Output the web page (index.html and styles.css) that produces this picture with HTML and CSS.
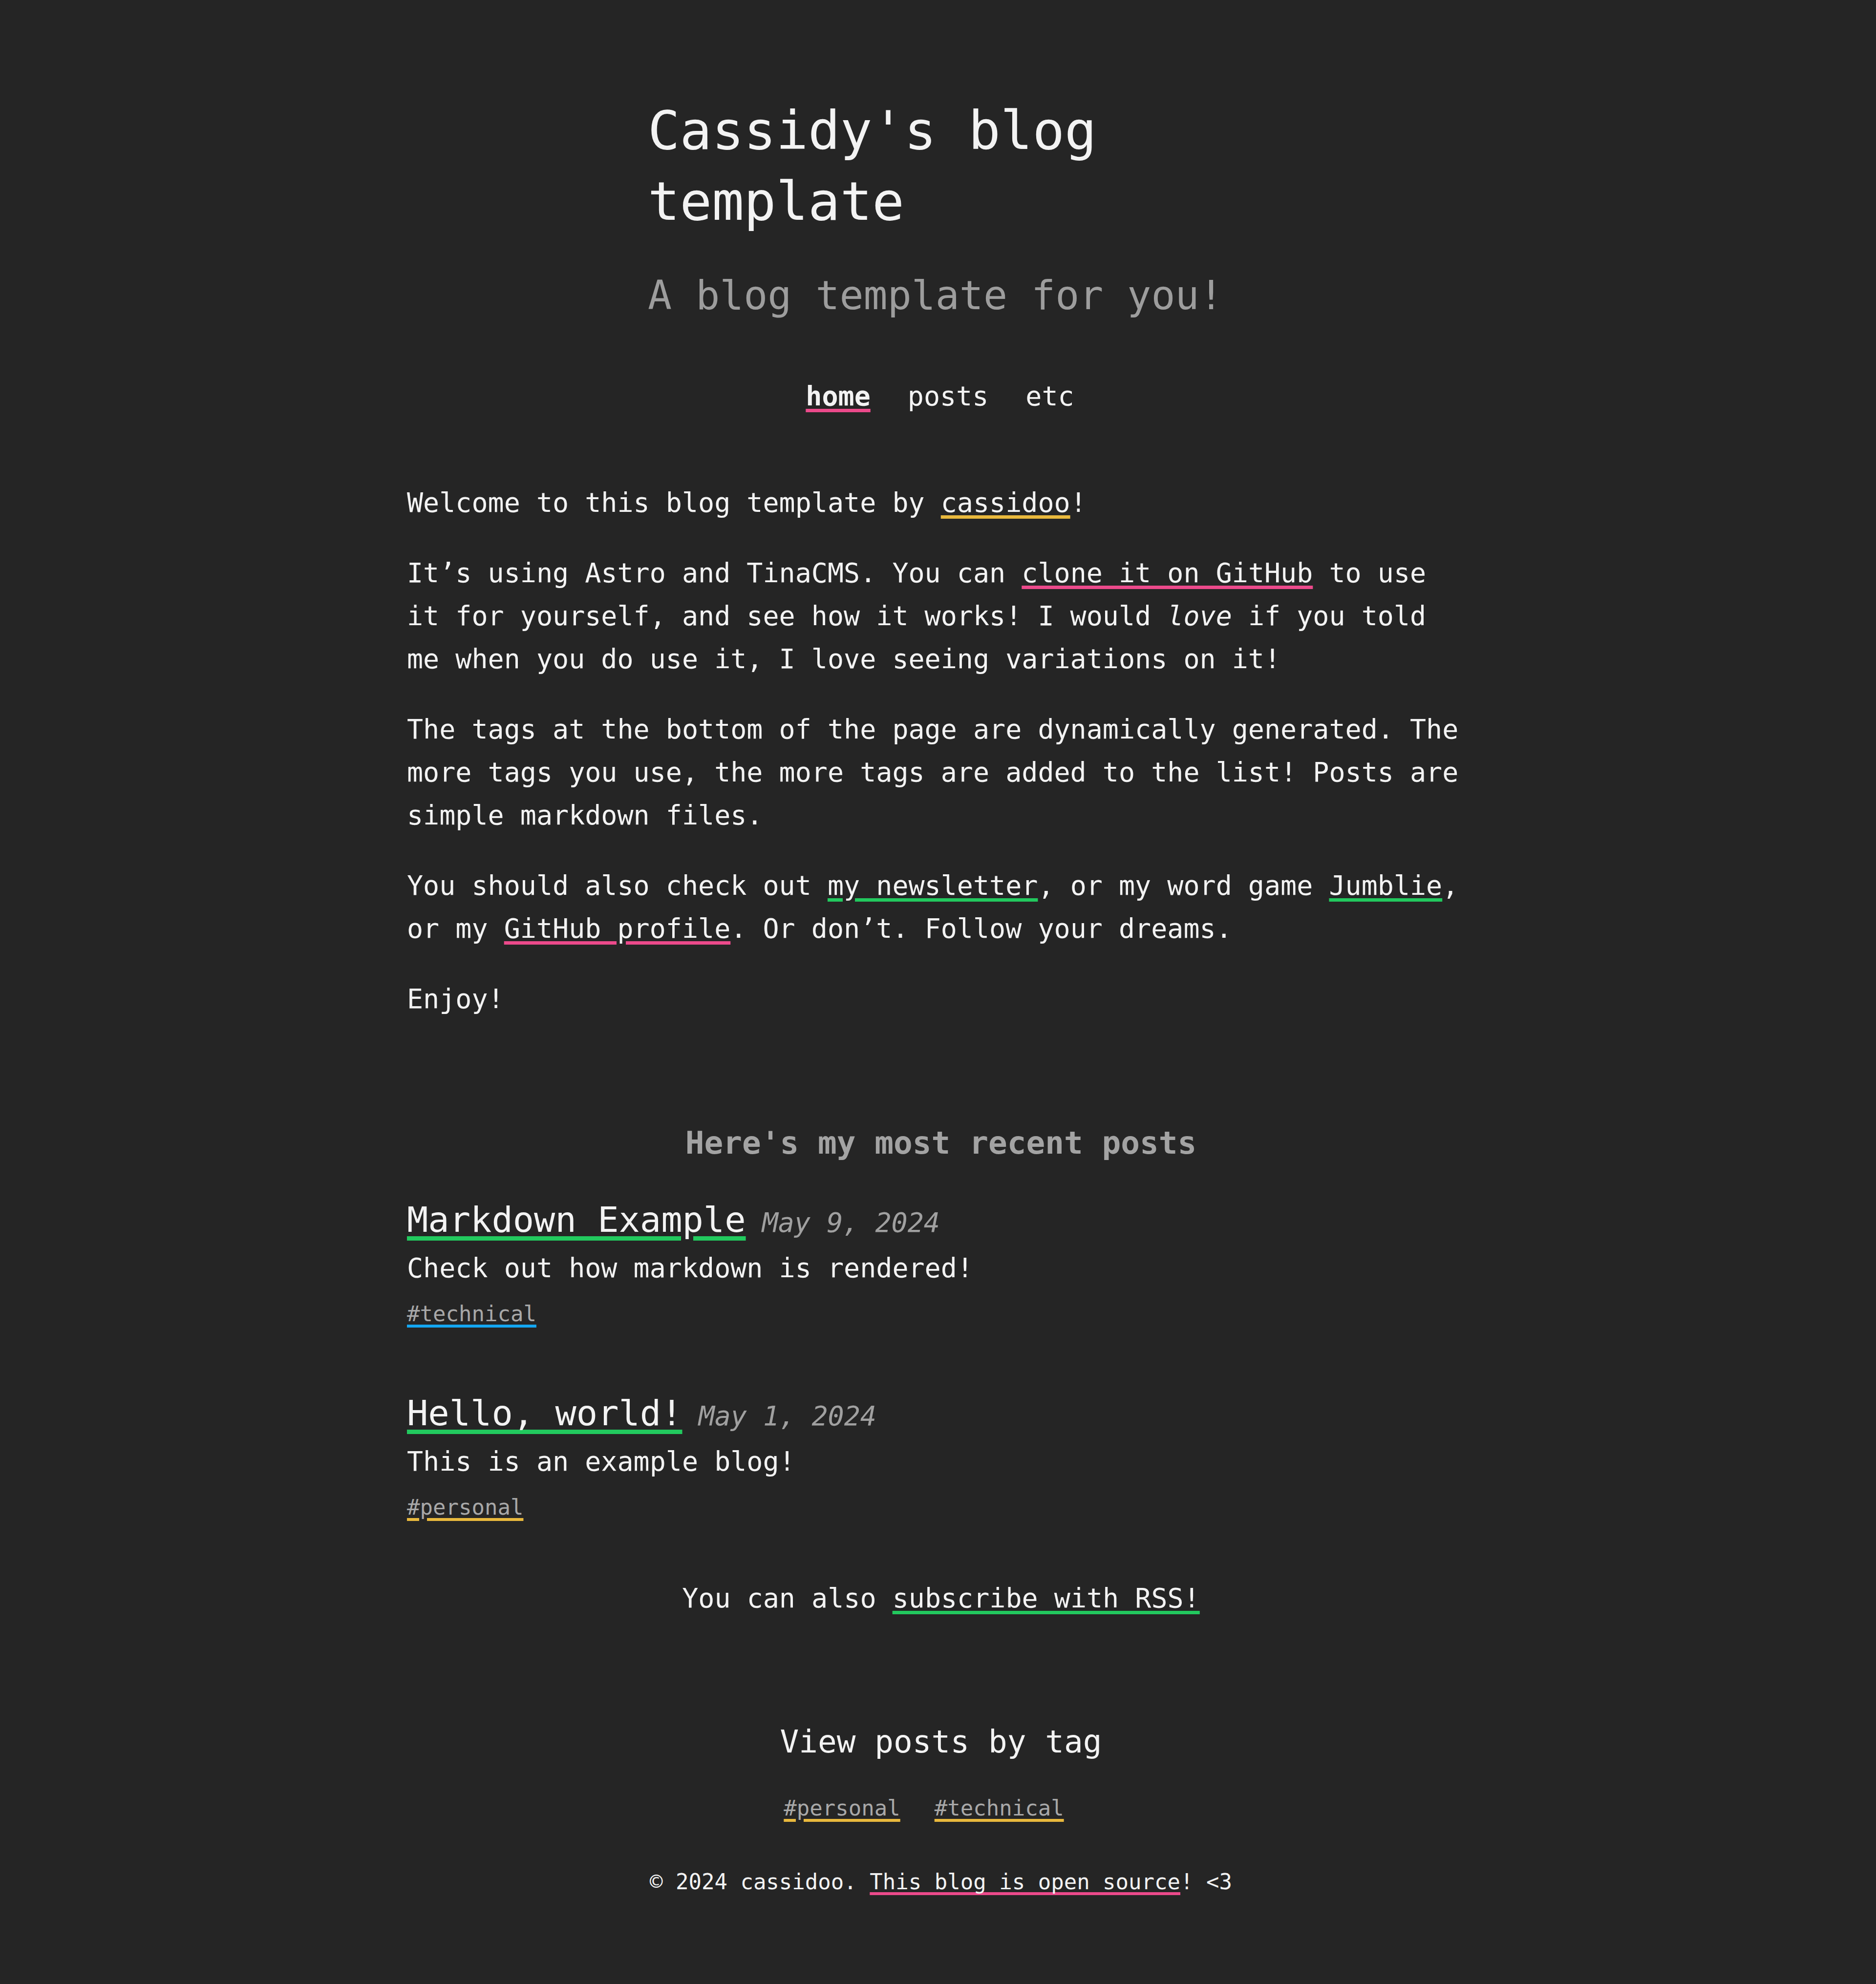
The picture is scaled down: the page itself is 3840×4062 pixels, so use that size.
FILE: index.html
```html
<!DOCTYPE html>
<html lang="en">
<head>
<meta charset="utf-8">
<title>Cassidy's blog template</title>
<link rel="stylesheet" href="styles.css">
</head>
<body>
<div class="page">
  <header class="site-header">
    <div class="brand">
      <h1 class="title">Cassidy's blog template</h1>
      <p class="tagline">A blog template for you!</p>
    </div>
    <nav class="nav">
      <a class="nav-link active" href="#">home</a>
      <a class="nav-link" href="#">posts</a>
      <a class="nav-link" href="#">etc</a>
    </nav>
  </header>

  <main>
    <section class="prose">
      <p>Welcome to this blog template by <a class="u-yellow" href="#">cassidoo</a>!</p>
      <p>It’s using Astro and TinaCMS. You can <a class="u-pink" href="#">clone it on GitHub</a> to use it for yourself, and see how it works! I would <em>love</em> if you told me when you do use it, I love seeing variations on it!</p>
      <p>The tags at the bottom of the page are dynamically generated. The more tags you use, the more tags are added to the list! Posts are simple markdown files.</p>
      <p>You should also check out <a class="u-green" href="#">my newsletter</a>, or my word game <a class="u-green" href="#">Jumblie</a>, or my <a class="u-pink" href="#">GitHub profile</a>. Or don’t. Follow your dreams.</p>
      <p>Enjoy!</p>
    </section>

    <section class="recent">
      <h3 class="section-title">Here's my most recent posts</h3>
      <ul class="post-list">
        <li class="post">
          <div class="post-head"><a class="post-title u-green" href="#">Markdown Example</a><time class="post-date"> May 9, 2024</time></div>
          <p class="post-desc">Check out how markdown is rendered!</p>
          <div class="post-tags"><a class="tag u-blue" href="#">#technical</a></div>
        </li>
        <li class="post">
          <div class="post-head"><a class="post-title u-green no-skip" href="#">Hello, world!</a><time class="post-date"> May 1, 2024</time></div>
          <p class="post-desc">This is an example blog!</p>
          <div class="post-tags"><a class="tag u-yellow" href="#">#personal</a></div>
        </li>
      </ul>
      <p class="rss">You can also <a class="u-green" href="#">subscribe with RSS!</a></p>
    </section>

    <section class="tag-section">
      <h2 class="tags-title">View posts by tag</h2>
      <div class="tag-list">
        <a class="tag tag-item u-yellow" href="#">#personal</a><a class="tag tag-item u-yellow" href="#">#technical</a>
      </div>
    </section>
  </main>

  <footer class="footer">© 2024 cassidoo. <a class="u-pink no-skip" href="#">This blog is open source</a>! &lt;3</footer>
</div>
</body>
</html>
```

FILE: styles.css
```css
html, body {
  margin: 0;
  padding: 0;
}

body {
  background: #252525;
  color: #f3f3f3;
  font-family: "DejaVu Sans Mono", "Liberation Mono", monospace;
  font-size: 55px;
  line-height: 88px;
}

a {
  color: inherit;
  text-decoration: underline;
  text-decoration-thickness: 0.13em;
  text-underline-offset: 0.13em;
  text-decoration-skip-ink: auto;
}

.no-skip {
  text-decoration-skip-ink: none;
}

.u-pink { text-decoration-color: #ec4a8b; }
.u-yellow { text-decoration-color: #e9b93d; }
.u-green { text-decoration-color: #22c95e; }
.u-blue { text-decoration-color: #14a6f1; }

.page {
  width: 2186px;
  margin-left: calc(50% - 1087px);
  padding-top: 195px;
  padding-bottom: 170px;
}

/* header */
.brand {
  width: 1200px;
  margin: 0 auto;
}

.title {
  margin: 0;
  font-size: 109px;
  line-height: 145px;
  font-weight: normal;
}

.tagline {
  margin: 67px 0 0;
  font-size: 81.5px;
  line-height: 106px;
  color: #9d9d9d;
}

.nav {
  margin-top: 109px;
  display: flex;
  justify-content: center;
  gap: 76px;
  padding-right: 4px;
}

.nav-link {
  text-decoration: none;
}

.nav-link.active {
  font-weight: bold;
  text-decoration: underline;
  text-decoration-color: #ec4a8b;
  text-decoration-thickness: 0.13em;
  text-underline-offset: 0.13em;
}

/* prose */
.prose {
  margin-top: 130px;
  padding-right: 10px;
}

.prose p {
  margin: 0 0 56px;
}

.prose p:last-child {
  margin-bottom: 0;
}

/* recent posts */
.recent {
  margin-top: 212px;
}

.section-title {
  margin: 0;
  font-size: 64.4px;
  line-height: 77px;
  font-weight: bold;
  color: #a3a3a3;
  text-align: center;
}

.post-list {
  list-style: none;
  margin: 72px 0 0;
  padding: 0;
}

.post + .post {
  margin-top: 121px;
}

.post-head {
  font-size: 72px;
  line-height: 94px;
}

.post-date {
  font-size: 55px;
  line-height: 1;
  font-style: italic;
  color: #a0a0a0;
}

.post-desc {
  margin: 8px 0 0;
}

.post-tags {
  margin-top: 11px;
  line-height: 70px;
}

.tag {
  font-size: 44px;
  color: #a8a8a8;
  text-underline-offset: 0.15em;
}

.rss {
  margin: 107px 0 0;
  text-align: center;
}

/* tags */
.tag-section {
  margin-top: 211px;
  text-align: center;
}

.tags-title {
  margin: 0;
  font-size: 64.4px;
  line-height: 77px;
  font-weight: normal;
}

.tag-list {
  margin-top: 59px;
  line-height: 70px;
}

.tag-item {
  margin-right: 70px;
}

/* footer */
.footer {
  margin-top: 81px;
  font-size: 44px;
  line-height: 70px;
  text-align: center;
}
```
